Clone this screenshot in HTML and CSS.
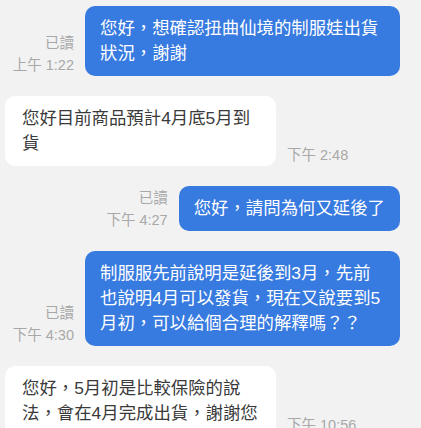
FILE: index.html
```html
<!DOCTYPE html>
<html lang="zh-Hant">
<head>
    <meta charset="UTF-8">
    <meta name="viewport" content="width=device-width, initial-scale=1.0">
    <link rel="stylesheet" href="styles.css">
    <title>聊天</title>
</head>
<body>
    <div class="chat">
        <div class="row mine">
            <div class="meta">
                <span>已讀</span>
                <span>上午 1:22</span>
            </div>
            <div class="bubble">您好，想確認扭曲仙境的制服娃出貨狀況，謝謝</div>
        </div>

        <div class="row theirs">
            <div class="bubble">您好目前商品預計4月底5月到貨</div>
            <div class="meta">
                <span>下午 2:48</span>
            </div>
        </div>

        <div class="row mine">
            <div class="meta">
                <span>已讀</span>
                <span>下午 4:27</span>
            </div>
            <div class="bubble">您好，請問為何又延後了</div>
        </div>

        <div class="row mine">
            <div class="meta">
                <span>已讀</span>
                <span>下午 4:30</span>
            </div>
            <div class="bubble">制服服先前說明是延後到3月，先前也說明4月可以發貨，現在又說要到5月初，可以給個合理的解釋嗎？？</div>
        </div>

        <div class="row theirs">
            <div class="bubble">您好，5月初是比較保險的說法，會在4月完成出貨，謝謝您</div>
            <div class="meta">
                <span>下午 10:56</span>
            </div>
        </div>
    </div>
</body>
</html>
```
FILE: styles.css
```css
body {
  margin: 0;
  background-color: #f2f2f2;
  font-family: "Liberation Sans", "Noto Sans CJK TC", sans-serif;
  overflow: hidden;
}

.chat {
  display: flex;
  flex-direction: column;
  gap: 20px;
  padding: 6px 21px 0 5px;
}

.row {
  display: flex;
  align-items: flex-end;
  gap: 11px;
}

.mine {
  justify-content: flex-end;
}

.bubble {
  font-size: 17.4px;
  line-height: 25px;
  border-radius: 10px;
}

.mine .bubble {
  max-width: 285px;
  padding: 10px 15px;
  background-color: #377ae0;
  color: #fff;
}

.theirs .bubble {
  max-width: 238px;
  padding: 10px 16px 10px 17px;
  background-color: #fff;
  color: #3a3a3a;
}

.meta {
  display: flex;
  flex-direction: column;
  align-items: flex-end;
  flex-shrink: 0;
  font-size: 14.5px;
  line-height: 22px;
  color: #a8a8a8;
}

.theirs .meta {
  align-items: flex-start;
}
```
